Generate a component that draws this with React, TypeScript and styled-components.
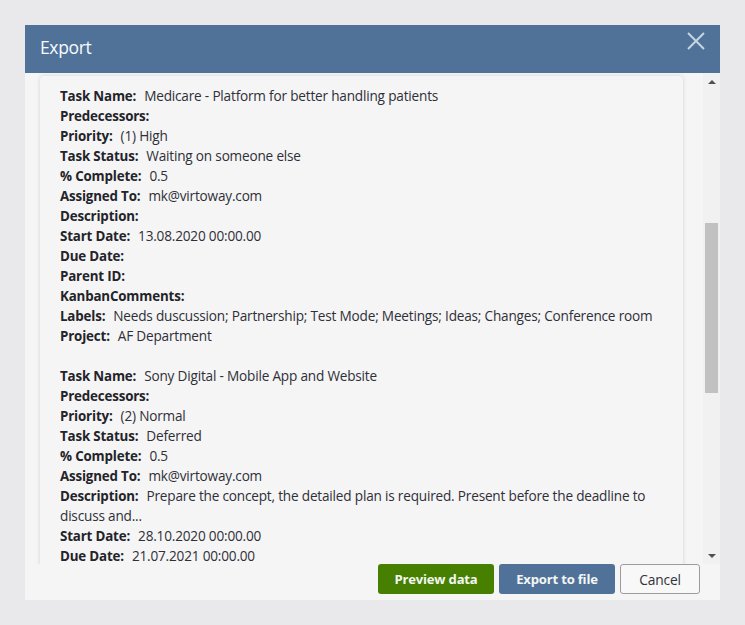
import React from "react";
import styled, { createGlobalStyle } from "styled-components";

const GlobalStyle = createGlobalStyle`
  html, body {
    margin: 0;
    padding: 0;
    background: #e9e9eb;
  }
  body {
    font-family: "Open Sans", "Noto Sans", "Liberation Sans", sans-serif;
  }
`;

const Page = styled.div`
  width: 745px;
  height: 625px;
  padding: 25px;
  box-sizing: border-box;
  background: #e9e9eb;
`;

const Dialog = styled.div`
  width: 695px;
  height: 575px;
  display: flex;
  flex-direction: column;
  background: #f5f5f5;
`;

const Header = styled.div`
  height: 48px;
  flex: none;
  display: flex;
  justify-content: space-between;
  align-items: flex-start;
  padding: 0 15px;
  background: #507299;
`;

const Title = styled.div`
  font-size: 17.5px;
  line-height: 45px;
  color: #f7fafc;
  letter-spacing: -0.35px;
`;

const CloseButton = styled.button`
  width: 18px;
  height: 18px;
  margin-top: 7px;
  padding: 0;
  border: none;
  background: none;
  cursor: pointer;
  display: block;
`;

const Body = styled.div`
  height: 491px;
  flex: none;
  display: flex;
`;

const ScrollArea = styled.div`
  flex: 1;
  min-width: 0;
  overflow: hidden;
  padding: 3px 20px 0 15px;
`;

const Card = styled.div`
  height: 500px;
  padding: 10px 20px 0;
  background: #f5f5f5;
  border-radius: 4px;
  box-shadow: 0 0 4px rgba(0, 0, 0, 0.14);
`;

const Task = styled.div`
  margin-bottom: 20px;
`;

const Row = styled.div`
  font-size: 13.6px;
  line-height: 20px;
  color: #2f2f38;
  letter-spacing: -0.19px;
`;

const Label = styled.span`
  font-size: 13.35px;
  letter-spacing: -0.17px;
  font-weight: 700;
  color: #23232a;
  margin-right: 8px;
`;

const Scrollbar = styled.div`
  width: 17px;
  flex: none;
  display: flex;
  flex-direction: column;
  background: #f1f1f1;
`;

const ArrowSlot = styled.div`
  height: 17px;
  flex: none;
  display: flex;
  align-items: center;
  justify-content: center;
`;

const Arrow = styled.div<{ $down?: boolean }>`
  width: 0;
  height: 0;
  border-left: 4px solid transparent;
  border-right: 4px solid transparent;
  ${({ $down }) =>
    $down ? "border-top: 4px solid #505050;" : "border-bottom: 4px solid #505050;"}
`;

const Track = styled.div`
  flex: 1;
  padding: 133px 2px 0;
`;

const Thumb = styled.div`
  height: 170px;
  background: #c1c1c1;
`;

const Footer = styled.div`
  flex: 1;
  display: flex;
  justify-content: flex-end;
  align-items: flex-start;
  gap: 5px;
  padding-right: 20px;
`;

const Button = styled.button<{ $variant: "green" | "blue" | "plain" }>`
  height: 30px;
  width: ${({ $variant }) => ($variant === "plain" ? "80px" : "116px")};
  box-sizing: border-box;
  padding: 0;
  border-radius: 3px;
  font-family: inherit;
  font-size: ${({ $variant }) => ($variant === "plain" ? "13.8px" : "13.1px")};
  letter-spacing: -0.2px;
  font-weight: ${({ $variant }) => ($variant === "plain" ? 500 : 700)};
  cursor: pointer;
  color: ${({ $variant }) => ($variant === "plain" ? "#33333b" : "#f4f6f4")};
  background: ${({ $variant }) =>
    $variant === "green" ? "#478000" : $variant === "blue" ? "#507299" : "#f8f8f8"};
  border: ${({ $variant }) => ($variant === "plain" ? "1px solid #a09a9e" : "none")};
`;

const tasks: [string, string][][] = [
  [
    ["Task Name", "Medicare - Platform for better handling patients"],
    ["Predecessors", ""],
    ["Priority", "(1) High"],
    ["Task Status", "Waiting on someone else"],
    ["% Complete", "0.5"],
    ["Assigned To", "mk@virtoway.com"],
    ["Description", ""],
    ["Start Date", "13.08.2020 00:00.00"],
    ["Due Date", ""],
    ["Parent ID", ""],
    ["KanbanComments", ""],
    ["Labels", "Needs duscussion; Partnership; Test Mode; Meetings; Ideas; Changes; Conference room"],
    ["Project", "AF Department"],
  ],
  [
    ["Task Name", "Sony Digital - Mobile App and Website"],
    ["Predecessors", ""],
    ["Priority", "(2) Normal"],
    ["Task Status", "Deferred"],
    ["% Complete", "0.5"],
    ["Assigned To", "mk@virtoway.com"],
    ["Description", "Prepare the concept, the detailed plan is required. Present before the deadline to discuss and..."],
    ["Start Date", "28.10.2020 00:00.00"],
    ["Due Date", "21.07.2021 00:00.00"],
  ],
];

export default function App() {
  return (
    <Page>
      <GlobalStyle />
      <Dialog>
        <Header>
          <Title>Export</Title>
          <CloseButton aria-label="Close">
            <svg width="18" height="18" viewBox="0 0 18 18">
              <path d="M1 1 L17 17 M17 1 L1 17" stroke="#c6d6e2" strokeWidth="1.9" fill="none" />
            </svg>
          </CloseButton>
        </Header>
        <Body>
          <ScrollArea>
            <Card>
              {tasks.map((task, i) => (
                <Task key={i}>
                  {task.map(([label, value]) => (
                    <Row key={label}>
                      <Label>{label}:</Label>
                      {value}
                    </Row>
                  ))}
                </Task>
              ))}
            </Card>
          </ScrollArea>
          <Scrollbar>
            <ArrowSlot>
              <Arrow />
            </ArrowSlot>
            <Track>
              <Thumb />
            </Track>
            <ArrowSlot>
              <Arrow $down />
            </ArrowSlot>
          </Scrollbar>
        </Body>
        <Footer>
          <Button $variant="green">Preview data</Button>
          <Button $variant="blue">Export to file</Button>
          <Button $variant="plain">Cancel</Button>
        </Footer>
      </Dialog>
    </Page>
  );
}
